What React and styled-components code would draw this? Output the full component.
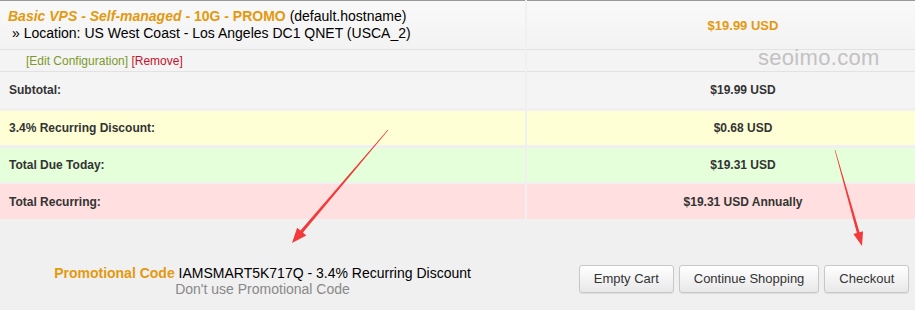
import React from "react";
import styled, { createGlobalStyle } from "styled-components";

const GlobalStyle = createGlobalStyle`
  html, body {
    margin: 0;
    padding: 0;
    background: #f0f0f0;
    overflow: hidden;
  }
  body {
    font-family: "Liberation Sans", Arial, sans-serif;
    font-size: 12px;
    color: #333;
  }
`;

const Page = styled.div`
  position: relative;
  width: 960px;
  height: 310px;
  background: #f0f0f0;
`;

// Cart table
const Table = styled.div`
  display: flex;
  flex-direction: column;
`;

const Row = styled.div`
  display: grid;
  grid-template-columns: 525px 432px;
  column-gap: 2px;
  margin-top: ${(p) => p.$gap || 0}px;
`;

const Cell = styled.div`
  display: flex;
  flex-direction: column;
  justify-content: center;
  height: ${(p) => p.$h}px;
  box-sizing: border-box;
  background: ${(p) => p.$bg || "#f4f4f4"};
  border-top: ${(p) => (p.$topBorder ? "1px solid #9a9a9a" : "none")};
  border-bottom: ${(p) => (p.$line ? "1px solid #e2e2e2" : "none")};
  padding-left: ${(p) => p.$pl || 0}px;
  text-align: ${(p) => (p.$center ? "center" : "left")};
`;

const ProductName = styled.div`
  font-size: 14px;
  line-height: 17px;
  color: #000;
`;

const Orange = styled.span`
  color: #e4990e;
  font-weight: bold;
  font-style: ${(p) => (p.$italic ? "italic" : "normal")};
  font-size: ${(p) => p.$size || 14}px;
`;

const Location = styled.div`
  font-size: 14px;
  line-height: 17px;
  color: #000;
  padding-left: 4px;
`;

const Links = styled.div`
  font-size: 12px;
  padding-left: 26px;
`;

const Link = styled.span`
  color: ${(p) => (p.$danger ? "#c8102e" : "#7c9a2a")};
`;

const Label = styled.span`
  font-weight: bold;
  font-size: 12px;
  color: #333;
`;

// Bottom area
const Footer = styled.div`
  display: grid;
  grid-template-columns: 525px 432px;
  column-gap: 2px;
  padding-top: 46px;
`;

const Promo = styled.div`
  text-align: center;
  font-size: 14px;
  line-height: 16px;
  color: #000;
`;

const Muted = styled.div`
  color: #888;
`;

const Buttons = styled.div`
  display: flex;
  justify-content: center;
  gap: 5px;
  padding-left: 2px;
`;

const Button = styled.button`
  font-family: "Liberation Sans", Arial, sans-serif;
  font-size: 13px;
  line-height: 16px;
  color: #333;
  height: 28px;
  padding: 0 14px;
  border: 1px solid #c8c8c8;
  border-radius: 3px;
  background: linear-gradient(#ffffff, #e8e8e8);
  box-shadow: 0 1px 1px rgba(0, 0, 0, 0.08);
`;

const Watermark = styled.div`
  position: absolute;
  left: 758px;
  top: 45px;
  font-family: "Liberation Sans", Arial, sans-serif;
  font-size: 22px;
  color: #c2c2c2;
  letter-spacing: 0.3px;
`;

const Overlay = styled.svg`
  position: absolute;
  left: 0;
  top: 0;
  pointer-events: none;
`;

function arrowPoints(x1, y1, x2, y2, tail, shaft, headLen, headHalf) {
  const dx = x2 - x1;
  const dy = y2 - y1;
  const len = Math.hypot(dx, dy);
  const ux = dx / len;
  const uy = dy / len;
  const nx = -uy;
  const ny = ux;
  const bx = x2 - ux * headLen;
  const by = y2 - uy * headLen;
  const pts = [
    [x1 + nx * tail, y1 + ny * tail],
    [bx + nx * shaft, by + ny * shaft],
    [bx + nx * headHalf, by + ny * headHalf],
    [x2, y2],
    [bx - nx * headHalf, by - ny * headHalf],
    [bx - nx * shaft, by - ny * shaft],
    [x1 - nx * tail, y1 - ny * tail],
  ];
  return pts.map((p) => p.join(",")).join(" ");
}

const rows = [
  { label: "Subtotal:", value: "$19.99 USD", bg: "#f4f4f4", h: 36, gap: 0 },
  { label: "3.4% Recurring Discount:", value: "$0.68 USD", bg: "#ffffd6", h: 34, gap: 3 },
  { label: "Total Due Today:", value: "$19.31 USD", bg: "#e4ffd9", h: 34, gap: 3 },
  { label: "Total Recurring:", value: "$19.31 USD Annually", bg: "#ffdfdf", h: 35, gap: 2 },
];

export default function App() {
  return (
    <Page>
      <GlobalStyle />
      <Table>
        <Row>
          <Cell $h={50} $bg="linear-gradient(#f9f9f9, #f3f3f3)" $topBorder $line $pl={8}>
            <ProductName>
              <Orange $italic>Basic VPS - Self-managed</Orange>
              <Orange> - 10G - PROMO</Orange> (default.hostname)
            </ProductName>
            <Location>» Location: US West Coast - Los Angeles DC1 QNET (USCA_2)</Location>
          </Cell>
          <Cell $h={50} $bg="linear-gradient(#f9f9f9, #f3f3f3)" $topBorder $line $center>
            <div>
              <Orange $size={13}>$19.99 USD</Orange>
            </div>
          </Cell>
        </Row>
        <Row>
          <Cell $h={22} $line>
            <Links>
              <Link>[Edit Configuration]</Link> <Link $danger>[Remove]</Link>
            </Links>
          </Cell>
          <Cell $h={22} $line />
        </Row>
        {rows.map((r) => (
          <Row key={r.label} $gap={r.gap}>
            <Cell $h={r.h} $bg={r.bg} $pl={9}>
              <div>
                <Label>{r.label}</Label>
              </div>
            </Cell>
            <Cell $h={r.h} $bg={r.bg} $center>
              <div>
                <Label>{r.value}</Label>
              </div>
            </Cell>
          </Row>
        ))}
      </Table>

      <Footer>
        <Promo>
          <div>
            <Orange>Promotional Code</Orange> IAMSMART5K717Q - 3.4% Recurring Discount
          </div>
          <Muted>Don't use Promotional Code</Muted>
        </Promo>
        <Buttons>
          <Button>Empty Cart</Button>
          <Button>Continue Shopping</Button>
          <Button>Checkout</Button>
        </Buttons>
      </Footer>

      <Watermark>seoimo.com</Watermark>

      <Overlay width="960" height="310">
        <polygon points={arrowPoints(388, 130, 292, 243, 0.3, 1.6, 15, 6)} fill="#f23a3a" />
        <polygon points={arrowPoints(835, 150, 862, 246, 0.3, 1.4, 14, 5)} fill="#f23a3a" />
      </Overlay>
    </Page>
  );
}
